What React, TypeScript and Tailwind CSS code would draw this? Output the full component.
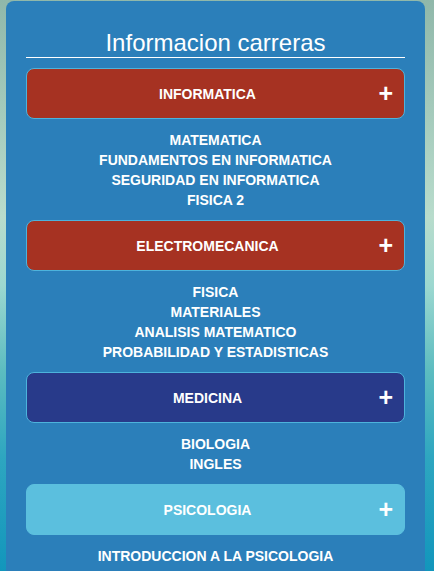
import React from "react";

type Career = { name: string; color: string; border: string; subjects: string[] };

const careers: Career[] = [
  { name: "INFORMATICA", color: "bg-[#a63222]", border: "border-[#4db3dc]", subjects: ["MATEMATICA", "FUNDAMENTOS EN INFORMATICA", "SEGURIDAD EN INFORMATICA", "FISICA 2"] },
  { name: "ELECTROMECANICA", color: "bg-[#a63222]", border: "border-[#4db3dc]", subjects: ["FISICA", "MATERIALES", "ANALISIS MATEMATICO", "PROBABILIDAD Y ESTADISTICAS"] },
  { name: "MEDICINA", color: "bg-[#283a8a]", border: "border-[#4db3dc]", subjects: ["BIOLOGIA", "INGLES"] },
  { name: "PSICOLOGIA", color: "bg-[#5bbfde]", border: "border-[#5bbfde]", subjects: ["INTRODUCCION A LA PSICOLOGIA"] },
];

export default function App() {
  return (
    <div
      className="w-[434px] h-[571px] overflow-hidden bg-[linear-gradient(to_bottom,#90b8aa_0%,#b8dccc_38%,#9cd8d0_50%,#5cbcc0_65%,#2ea6c0_80%,#1296bc_100%)] pl-[6px] pr-[9px] pt-[1px]"
      style={{ fontFamily: '"Liberation Sans", Arial, sans-serif' }}
    >
      <div className="bg-[#2b7fba] rounded-[8px] h-[600px] px-[20px] pt-[29px]">
        <h1 className="text-white text-[24px] leading-[26px] text-center border-b border-white pb-[1px]">
          Informacion carreras
        </h1>
        <div className="flex flex-col mt-[10px]">
          {careers.map((c) => (
            <div key={c.name} className="flex flex-col">
              <div
                className={`${c.color} ${c.border} border rounded-[8px] h-[51px] flex items-center justify-center relative pr-[16px]`}
              >
                <span className="text-white font-bold text-[14px] pt-[2px]">{c.name}</span>
                <span className="absolute right-[11px] top-0 bottom-0 flex items-center text-white font-bold text-[25px] leading-none pb-[1px]">+</span>
              </div>
              <div className="flex flex-col items-center pt-[11px] pb-[10px]">
                {c.subjects.map((s) => (
                  <div key={s} className="text-white font-bold text-[14px] leading-[20px]">
                    {s}
                  </div>
                ))}
              </div>
            </div>
          ))}
        </div>
      </div>
    </div>
  );
}
